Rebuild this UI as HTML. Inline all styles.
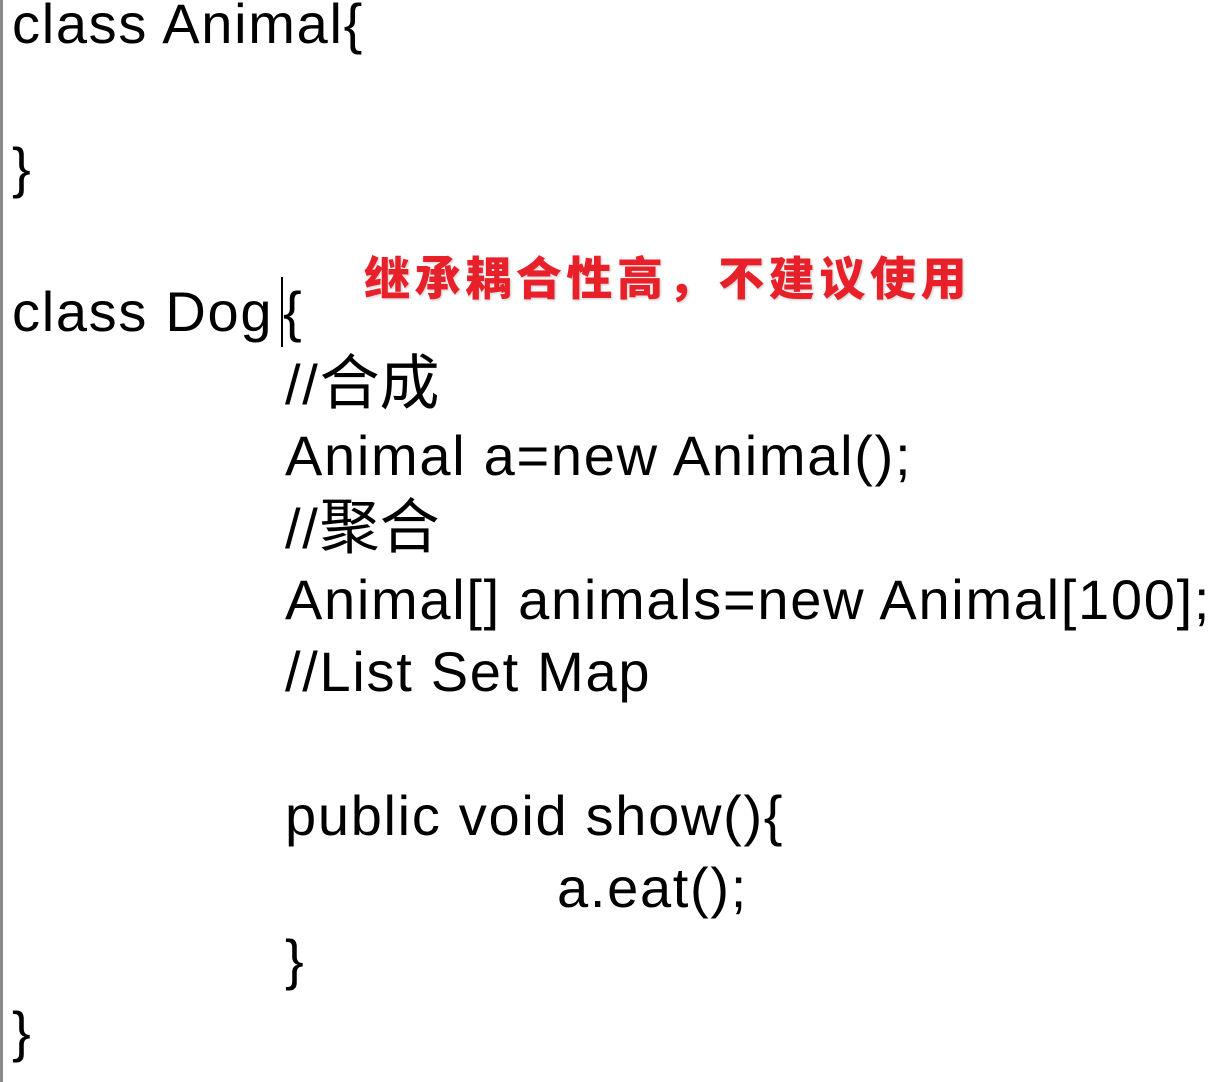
<!DOCTYPE html>
<html><head><meta charset="utf-8"><style>
html,body{margin:0;padding:0;background:#fff;width:1229px;height:1082px;overflow:hidden;position:relative}
.bar{position:absolute;left:0;top:0;width:3px;height:1082px;background:#8a8a8a}
.code{position:absolute;left:12px;top:-12px;font-family:"Liberation Sans","Noto Sans CJK SC",sans-serif;font-size:56px;line-height:72px;color:#000;letter-spacing:1.7px}
.code div{height:72px;white-space:pre;position:relative}
.i1{padding-left:273px}
.i2{padding-left:545px}
.cj{font-size:60px;letter-spacing:0}
.br{position:absolute;left:271px;top:0}
.red{position:absolute;left:364px;top:244px;font-family:"Noto Sans CJK SC","WenQuanYi Zen Hei",sans-serif;font-weight:900;font-size:46px;line-height:64px;color:#e8202a;letter-spacing:4.6px;white-space:nowrap;text-shadow:0 0 2px #fff,1px 1px 2px #bbb}
.cur{position:absolute;left:281px;top:277px;width:2px;height:70px;background:#000}
</style></head><body>
<div class="bar"></div>
<div class="code"><div>class Animal{</div><div></div><div>}</div><div></div><div>class Dog<span class="br">{</span></div><div class="i1">//<span class="cj">合成</span></div><div class="i1">Animal a=new Animal();</div><div class="i1">//<span class="cj">聚合</span></div><div class="i1">Animal[] animals=new Animal[100];</div><div class="i1">//List Set Map</div><div></div><div class="i1">public void show(){</div><div class="i2">a.eat();</div><div class="i1">}</div><div>}</div></div>
<div class="cur"></div>
<div class="red">继承耦合性高，不建议使用</div>
</body></html>
